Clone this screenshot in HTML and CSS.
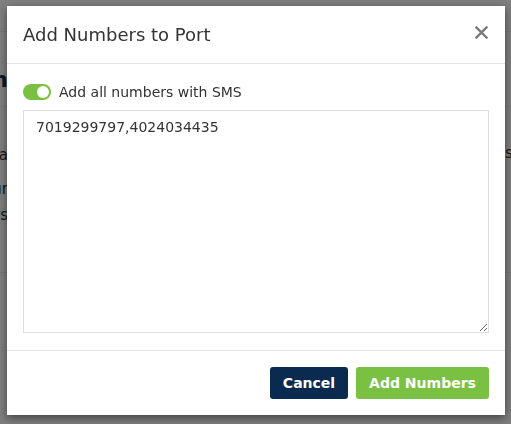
FILE: index.html
```html
<!DOCTYPE html>
<html lang="en">
<head>
    <meta charset="UTF-8">
    <meta name="viewport" content="width=device-width, initial-scale=1.0">
    <title>Add Numbers to Port</title>
    <link rel="stylesheet" href="styles.css">
</head>
<body>
    <div class="page">
        <div class="topbar"></div>
        <div class="page-row">
            <div class="side side-left"><h2 class="page-title">Port-in</h2></div>
            <div class="middle"></div>
            <div class="side side-right"></div>
        </div>
        <div class="page-row section">
            <div class="side side-left">
                <p class="line">Phone na</p>
                <p class="line gap">Your</p>
                <p class="line">Numbers</p>
            </div>
            <div class="middle"></div>
            <div class="side side-right">
                <p class="line">sms</p>
            </div>
        </div>
    </div>

    <div class="overlay"></div>

    <div class="modal">
        <div class="modal-header">
            <h4 class="modal-title">Add Numbers to Port</h4>
            <button class="close-btn" aria-label="Close">
                <svg width="13" height="13" viewBox="0 0 13 13">
                    <path d="M1.5 1.5 L11.5 11.5 M11.5 1.5 L1.5 11.5" stroke="#7a7a7a" stroke-width="2.4" stroke-linecap="square"/>
                </svg>
            </button>
        </div>
        <div class="modal-body">
            <label class="switch-row">
                <span class="switch"><span class="knob"></span></span>
                <span class="switch-label">Add all numbers with SMS</span>
            </label>
            <textarea class="numbers">7019299797,4024034435</textarea>
        </div>
        <div class="modal-footer">
            <button class="btn btn-cancel">Cancel</button>
            <button class="btn btn-add">Add Numbers</button>
        </div>
    </div>
</body>
</html>
```

FILE: styles.css
```css
body {
    margin: 0;
    padding: 0;
    overflow: hidden;
    background: #fff;
    font-family: "DejaVu Sans", "Liberation Sans", sans-serif;
    color: #333;
}

.page {
    height: 424px;
}

.topbar {
    height: 31px;
    border-bottom: 1px solid #eee;
}

.page-row {
    display: flex;
    height: 74px;
    border-bottom: 1px solid #eee;
}

.page-row.section {
    height: 165px;
}

.side {
    width: 8px;
    overflow: hidden;
    white-space: nowrap;
}

.side-left {
    display: flex;
    flex-direction: column;
    align-items: flex-end;
}

.middle {
    flex: 1;
}

.side-right {
    width: 6px;
}

.page-title {
    margin: 35px 0 0;
    font-size: 22px;
    font-weight: bold;
    color: #14345c;
    line-height: 26px;
}

.line {
    margin: 0;
    font-size: 15px;
    line-height: 26px;
    color: #333;
}

.side-left .line:first-child {
    margin-top: 35px;
}

.line.gap {
    margin-top: 8px;
}

.side-right .line {
    margin-top: 33px;
}

.overlay {
    position: fixed;
    inset: 0;
    background: rgba(0, 0, 0, 0.5);
}

.modal {
    position: fixed;
    top: 6px;
    left: 7px;
    width: 498px;
    height: 409px;
    background: #fff;
    box-shadow: 0 3px 9px rgba(0, 0, 0, 0.5);
    display: flex;
    flex-direction: column;
    box-sizing: border-box;
}

.modal-header {
    display: flex;
    align-items: center;
    justify-content: space-between;
    padding: 15px 17px 15px 16px;
    border-bottom: 1px solid #e5e5e5;
}

.modal-title {
    margin: 0;
    font-size: 18px;
    font-weight: normal;
    line-height: 27px;
    color: #333;
}

.close-btn {
    background: none;
    border: none;
    padding: 0;
    margin-top: -4px;
    cursor: pointer;
    display: flex;
}

.modal-body {
    flex: 1;
    padding: 16px 16px 17px;
    display: flex;
    flex-direction: column;
}

.switch-row {
    display: flex;
    align-items: center;
    gap: 8px;
    height: 24px;
}

.switch {
    width: 28px;
    height: 16px;
    border-radius: 8px;
    background: #7ac143;
    position: relative;
}

.knob {
    position: absolute;
    top: 2px;
    right: 2px;
    width: 12px;
    height: 12px;
    border-radius: 50%;
    background: #fff;
}

.switch-label {
    font-size: 14px;
    color: #333;
}

.numbers {
    display: block;
    margin-top: 6px;
    flex: 1;
    box-sizing: border-box;
    width: 100%;
    padding: 6px 12px;
    border: 1px solid #ddd;
    border-radius: 0;
    font-family: "DejaVu Sans", "Liberation Sans", sans-serif;
    font-size: 14px;
    line-height: 20px;
    color: #333;
    resize: vertical;
    outline: none;
}

.modal-footer {
    display: flex;
    justify-content: flex-end;
    gap: 8px;
    padding: 16px;
    border-top: 1px solid #e5e5e5;
}

.btn {
    height: 32px;
    border: none;
    border-radius: 3px;
    color: #fff;
    font-family: "DejaVu Sans", "Liberation Sans", sans-serif;
    font-weight: bold;
    font-size: 14px;
    cursor: pointer;
}

.btn-cancel {
    width: 78px;
    background: #0b2a4f;
}

.btn-add {
    width: 133px;
    background: #7ac143;
}
```
